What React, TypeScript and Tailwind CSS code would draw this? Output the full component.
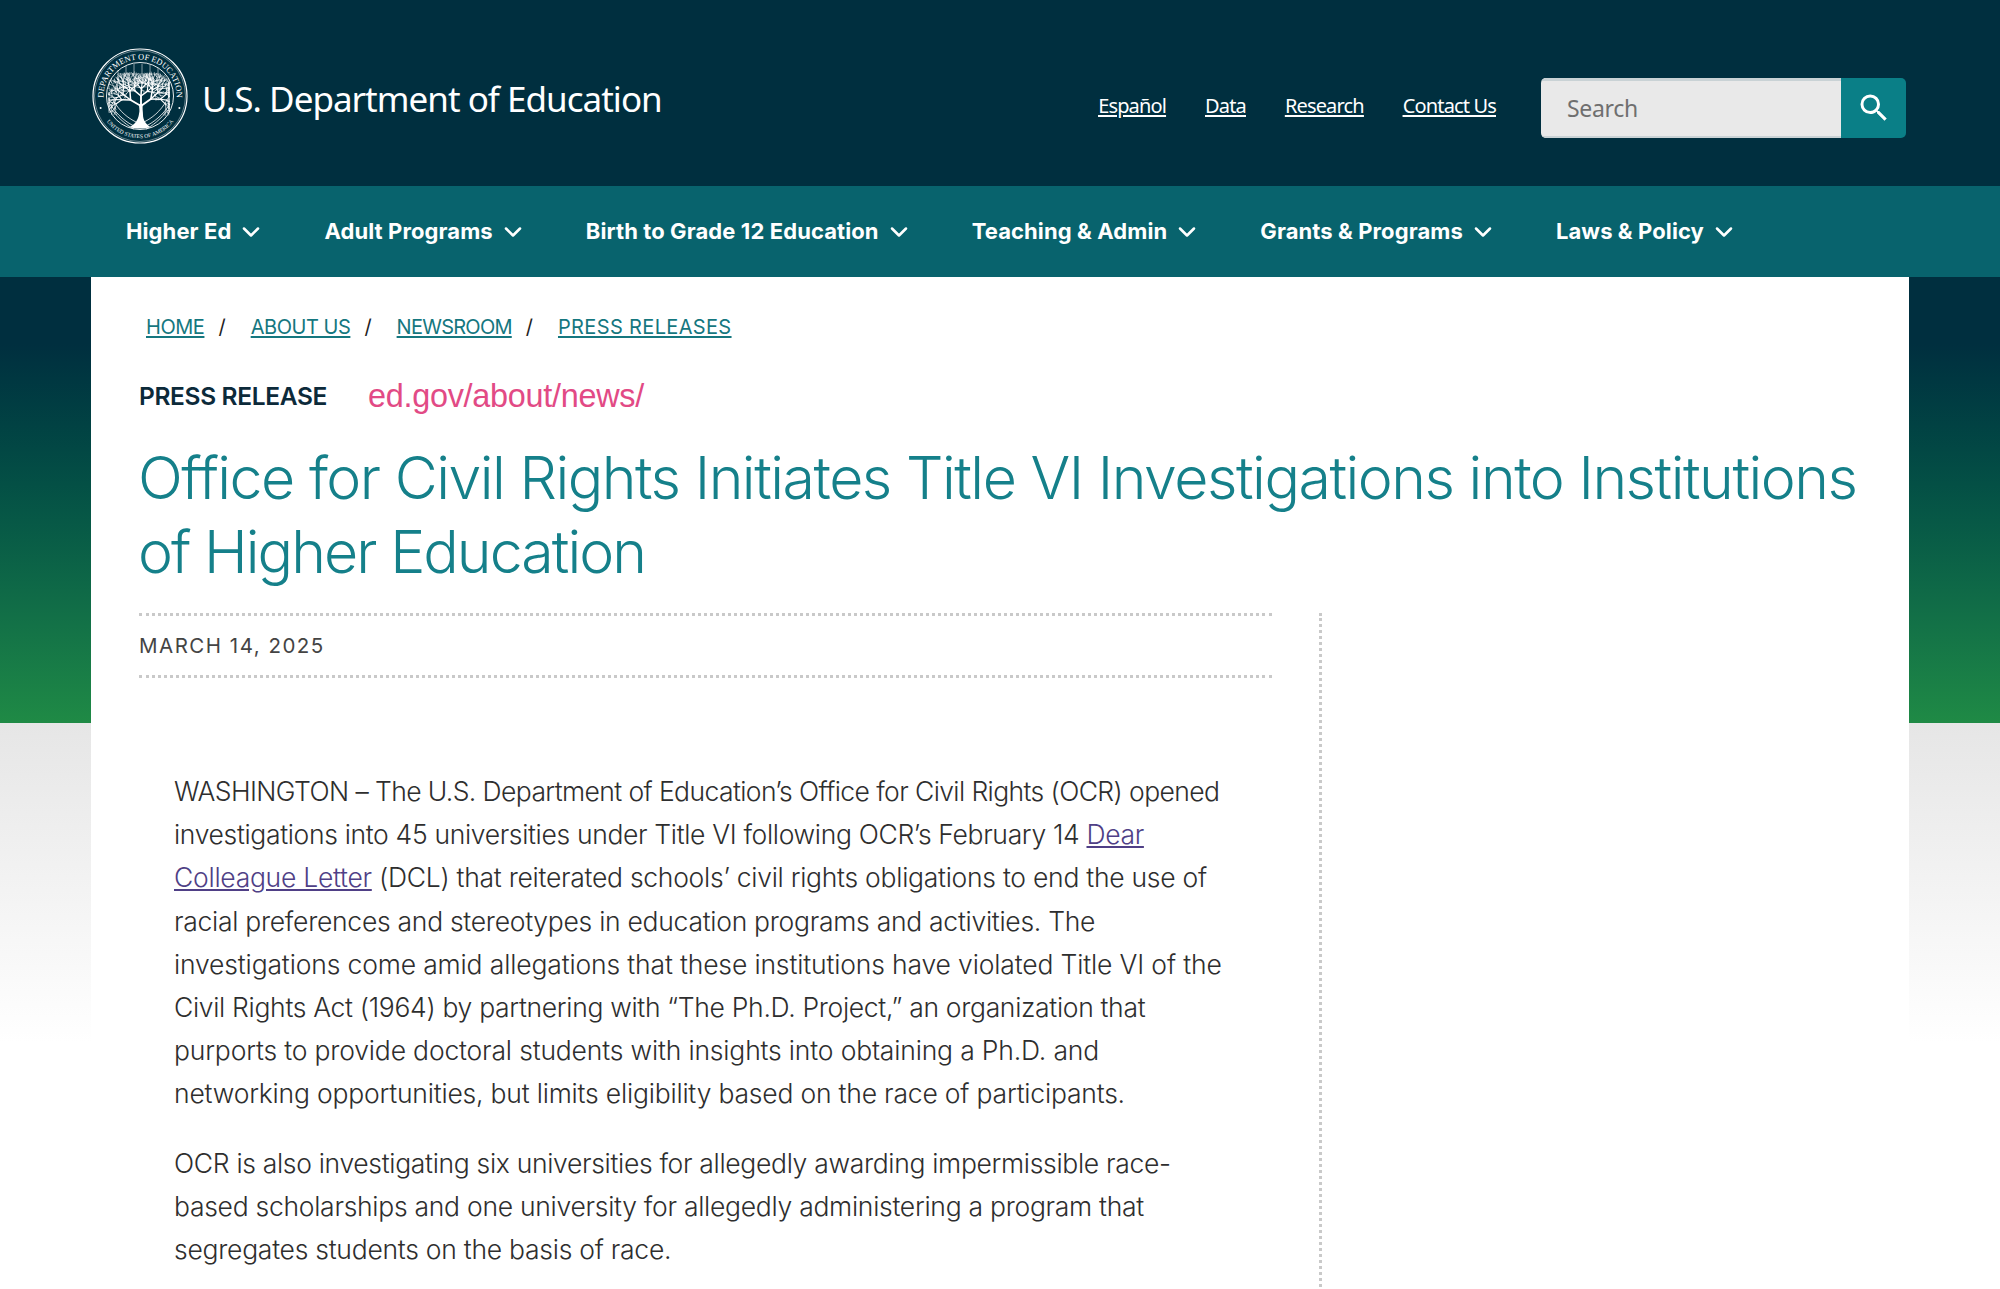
import React from "react";
import { ChevronDown } from "lucide-react";
import { MdSearch } from "react-icons/md";

const nav = ["Higher Ed", "Adult Programs", "Birth to Grade 12 Education", "Teaching & Admin", "Grants & Programs", "Laws & Policy"];
const crumbs = [
  { t: "HOME", c: "tracking-[-0.45px]" },
  { t: "ABOUT US", c: "tracking-[-0.45px]" },
  { t: "NEWSROOM", c: "tracking-[-0.75px]" },
  { t: "PRESS RELEASES", c: "tracking-[0.35px]" },
];

function buildTree() {
  let s = 7;
  const rnd = () => {
    s = (s * 16807) % 2147483647;
    return s / 2147483647;
  };
  const out: { d: string; w: number }[] = [];
  const grow = (x: number, y: number, a: number, l: number, depth: number) => {
    const x2 = x + Math.cos(a) * l;
    const y2 = y + Math.sin(a) * l;
    const nx = Math.max(17, Math.min(77, x2));
    const ny = Math.max(21, y2);
    out.push({ d: `M${x.toFixed(1)} ${y.toFixed(1)}L${nx.toFixed(1)} ${ny.toFixed(1)}`, w: Math.max(0.5, depth * 0.38) });
    if (depth <= 0) return;
    const n = depth > 2 ? 3 : 2;
    for (let i = 0; i < n; i++) {
      const spread = (i - (n - 1) / 2) * (0.62 + rnd() * 0.35);
      grow(nx, ny, a + spread + (rnd() - 0.5) * 0.3, l * (0.68 + rnd() * 0.14), depth - 1);
    }
  };
  grow(49, 58, -Math.PI / 2 - 1.05, 12, 5);
  grow(49, 58, -Math.PI / 2 + 0.95, 12, 5);
  grow(49, 58, -Math.PI / 2, 10, 5);
  return out;
}
const twigs = buildTree();

function Seal() {
  return (
    <svg viewBox="0 0 96 96" className="w-24 h-24 shrink-0" fill="none" stroke="#fff">
      <defs>
        <path id="topArc" d="M13.2 59 A36.5 36.5 0 1 1 82.8 59" />
        <path id="botArc" d="M8.5 62.4 A42 42 0 0 0 87.5 62.4" />
      </defs>
      <circle cx="48" cy="48" r="47" strokeWidth="1.2" />
      <circle cx="48" cy="48" r="45.5" strokeWidth="0.4" />
      <circle cx="48" cy="48" r="33.5" strokeWidth="0.9" />
      <text fill="#fff" stroke="none" fontSize="8.4" fontFamily="Liberation Serif, serif" textAnchor="middle">
        <textPath href="#topArc" startOffset="50%">DEPARTMENT OF EDUCATION</textPath>
      </text>
      <text fill="#fff" stroke="none" fontSize="5.6" fontFamily="Liberation Serif, serif" textAnchor="middle">
        <textPath href="#botArc" startOffset="50%">UNITED STATES OF AMERICA</textPath>
      </text>
      <circle cx="8.6" cy="60" r="1" fill="#fff" stroke="none" />
      <circle cx="87.4" cy="60" r="1" fill="#fff" stroke="none" />
      <path d="M26 22 V32 M34 18 V28 M42 16 V26 M50 16 V26 M58 17 V27 M66 20 V30 M26 26 H68" strokeWidth="0.7" opacity="0.75" />
      <path d="M18 56 C26 68 34 74 42 78 M21 52 C28 64 36 70 44 74 M78 56 C70 68 62 74 54 78 M75 52 C68 64 60 70 52 74 M20 62 C28 72 36 78 42 81 M76 62 C68 72 60 78 54 81" strokeWidth="0.8" />
      {twigs.map((t, i) => (
        <path key={i} d={t.d} strokeWidth={t.w} strokeLinecap="round" />
      ))}
      <path d="M38 79 C43 76 46 72 47 66 C48 62 47 60 47 56 L51 56 C50 60 51 63 51 67 C51 72 54 76 58 79 C52 81 44 81 38 79 Z" fill="#fff" stroke="none" />
    </svg>
  );
}

const para1: { t: React.ReactNode; c: string }[] = [
  { t: "WASHINGTON – The U.S. Department of Education’s Office for Civil Rights (OCR) opened", c: "tracking-[-0.6px]" },
  { t: <>investigations into 45 universities under Title VI following OCR’s February 14 <a className="underline text-[#4f3f86]">Dear</a></>, c: "tracking-[-0.34px]" },
  { t: <><a className="underline text-[#4f3f86]">Colleague Letter</a> (DCL) that reiterated schools’ civil rights obligations to end the use of</>, c: "tracking-[-0.27px]" },
  { t: "racial preferences and stereotypes in education programs and activities. The", c: "tracking-[-0.28px]" },
  { t: "investigations come amid allegations that these institutions have violated Title VI of the", c: "tracking-[-0.15px]" },
  { t: "Civil Rights Act (1964) by partnering with “The Ph.D. Project,” an organization that", c: "tracking-[-0.32px]" },
  { t: "purports to provide doctoral students with insights into obtaining a Ph.D. and", c: "tracking-[-0.17px]" },
  { t: "networking opportunities, but limits eligibility based on the race of participants.", c: "tracking-[-0.2px]" },
];
const para2 = [
  { t: "OCR is also investigating six universities for allegedly awarding impermissible race-", c: "tracking-[-0.32px]" },
  { t: "based scholarships and one university for allegedly administering a program that", c: "tracking-[-0.28px]" },
  { t: "segregates students on the basis of race.", c: "tracking-[-0.26px]" },
];

export default function App() {
  return (
    <div className="relative h-[1289px] overflow-hidden bg-white font-['Inter',sans-serif]">
      <header className="h-[186px] bg-[#002f3f] flex items-start justify-between pl-[92px] pr-[94px]">
        <div className="flex items-center gap-[14px] mt-[48px]">
          <Seal />
          <span className="text-white text-[35px] leading-[48px] font-['Noto_Sans',sans-serif] tracking-[-0.98px] mt-[6px]">U.S. Department of Education</span>
        </div>
        <div className="flex items-center mt-[78px]">
          <div className="flex gap-[39px] text-white text-[20px] font-['Noto_Sans',sans-serif] tracking-[-0.85px] underline underline-offset-2 mr-[45px] mt-[-4px]">
            <a>Español</a>
            <a>Data</a>
            <a>Research</a>
            <a>Contact Us</a>
          </div>
          <div className="flex h-[60px] w-[365px] rounded-[5px] overflow-hidden">
            <div className="w-[300px] bg-[#e9e9e9] border-t-[3px] border-b-2 border-[#c9d2d5] flex items-center pl-[26px] text-[23px] text-[#6f6f6f] font-['Noto_Sans',sans-serif] tracking-[-0.3px]">Search</div>
            <div className="flex-1 bg-[#0a7f87] flex items-center justify-center">
              <MdSearch className="w-[36px] h-[36px] text-white" />
            </div>
          </div>
        </div>
      </header>

      <nav className="h-[91px] bg-[#08636d] flex items-center pl-[126px] gap-[59px] text-white text-[22px] font-bold tracking-[0.1px]">
        {nav.map((n) => (
          <div key={n} className="flex items-center gap-[6px]">
            <span>{n}</span>
            <ChevronDown className="w-[28px] h-[28px]" strokeWidth={2.2} />
          </div>
        ))}
      </nav>

      <div className="absolute top-[277px] left-0 right-0 h-[446px] bg-gradient-to-b from-[#002f3f] from-[15%] to-[#1f8a45]" />
      <div className="absolute top-[723px] left-0 right-0 h-[320px] bg-gradient-to-b from-[#e6e6e6] to-white" />

      <main className="relative mx-[91px] h-[1012px] bg-white pl-[48px]">
        <div className="flex items-center pt-[36px] pl-[7px] text-[20px] leading-[28px] text-[#15777f] font-normal">
          {crumbs.map((c, i) => (
            <React.Fragment key={c.t}>
              <a className={`underline underline-offset-2 ${c.c}`}>{c.t}</a>
              {i < 3 && <span className="text-[#222] ml-[14px] mr-[25px]">/</span>}
            </React.Fragment>
          ))}
        </div>

        <div className="flex items-center mt-[35px] h-[40px]">
          <span className="text-[24.5px] font-semibold text-[#0c2a3a] tracking-[-0.35px]">PRESS RELEASE</span>
          <span className="ml-[41px] text-[32.4px] text-[#e24a85] font-['Liberation_Sans',sans-serif] tracking-[-0.27px]">ed.gov/about/news/</span>
        </div>

        <h1 className="mt-[25px] -ml-px text-[59px] leading-[74px] font-light text-[#15808a] tracking-[-1.48px] w-[1760px]">
          <span className="block whitespace-nowrap">Office for Civil Rights Initiates Title VI Investigations into Institutions</span>
          <span className="block whitespace-nowrap tracking-[-1.95px]">of Higher Education</span>
        </h1>

        <div className="flex mt-[24px]">
          <div className="w-[1133px]">
            <div className="border-y-[3px] border-dotted border-[#c9c9c9] h-[65px] pt-[2px] flex items-center text-[20.5px] font-normal tracking-[1.5px] text-[#444]">
              MARCH 14, 2025
            </div>
            <div className="mt-[92px] ml-[35px] text-[26.5px] leading-[43.2px] font-light text-[#2e2e2e]">
              <p>
                {para1.map((l, i) => (
                  <span key={i} className={`block whitespace-nowrap ${l.c}`}>{l.t}</span>
                ))}
              </p>
              <p className="mt-[26px]">
                {para2.map((l) => (
                  <span key={l.t} className={`block whitespace-nowrap ${l.c}`}>{l.t}</span>
                ))}
              </p>
            </div>
          </div>
          <div className="ml-[47px] w-0 h-[680px] border-l-[3px] border-dotted border-[#c9c9c9]" />
        </div>
      </main>
    </div>
  );
}
